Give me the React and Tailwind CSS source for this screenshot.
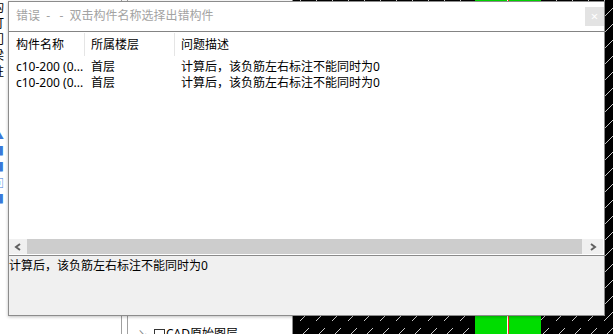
import React from "react";

const font = { fontFamily: '"Noto Sans", "Noto Sans CJK SC", sans-serif' };

const rows = [
  { name: "c10-200 (0...", floor: "首层", desc: "计算后，该负筋左右标注不能同时为0" },
  { name: "c10-200 (0...", floor: "首层", desc: "计算后，该负筋左右标注不能同时为0" },
];

// left edge of the app behind the dialog: only a few pixels of each line peek out
const edgeBits = ["构", "打", "门", "梁", "柱", "", "", "", "▲", "■", "■", "▣", "■", "1", "1", "1", "1", "1"];

function Hatch() {
  return (
    <svg className="absolute inset-0 h-full w-full" xmlns="http://www.w3.org/2000/svg">
      <defs>
        <pattern id="hatch" width="16" height="16" patternUnits="userSpaceOnUse" x="5" y="2">
          <path d="M2 15 L11 6" stroke="#c8c8c8" strokeWidth="1" />
        </pattern>
      </defs>
      <rect width="100%" height="100%" fill="#000" />
      <rect width="100%" height="100%" fill="url(#hatch)" />
    </svg>
  );
}

function Chevron({ dir }) {
  return (
    <svg width="8" height="8" viewBox="0 0 8 8">
      <polyline
        points={dir === "left" ? "6,1 2,4 6,7" : "2,1 6,4 2,7"}
        fill="none"
        stroke="#606060"
        strokeWidth="2"
      />
    </svg>
  );
}

export default function App() {
  return (
    <div className="relative w-[613px] h-[334px] overflow-hidden bg-white text-[12px] leading-[16px]" style={font}>
      {/* Background application */}
      <div className="flex h-full">
        <div className="flex w-[293px] h-full bg-white">
          <div className="w-[121px] h-full flex flex-col overflow-hidden">
            {edgeBits.map((c, i) => (
              <span
                key={i}
                className={`h-[16px] -ml-[8px] leading-[16px] ${i >= 8 && i <= 12 ? "text-[#3b78d8]" : "text-black"}`}
              >
                {c}
              </span>
            ))}
          </div>
          <div className="w-[1px] h-full bg-[#a0a0a0]" />
          <div className="w-[5px] h-full" />
          <div className="w-[1px] h-full bg-[#a0a0a0]" />
          <div className="flex-1 flex flex-col justify-end">
            <div className="flex items-center h-[16px] -mb-[8px] pl-[10px] text-black">
              <span className="text-[#888] text-[10px] w-[16px]">↘</span>
              <span className="w-[11px] h-[11px] border border-[#333] bg-white mr-[1px]" />
              <span>CAD原始图层</span>
            </div>
          </div>
          <div className="w-[1px] h-full bg-[#909090]" />
        </div>
        <div className="relative flex-1 h-full">
          <Hatch />
          <div className="absolute left-[182px] top-0 w-[32px] h-full bg-[#00dd00]" />
          <div className="absolute left-[214px] top-0 w-[1px] h-full bg-white" />
          <div className="absolute left-[215px] top-0 w-[1px] h-full bg-[#ff2020]" />
          <div className="absolute left-[216px] top-0 w-[32px] h-full bg-[#00dd00]" />
        </div>
      </div>

      {/* Error dialog */}
      <div className="absolute left-[8px] top-[1px] w-[597px] h-[315px] border border-[#8c8c8c] bg-white flex flex-col shadow-[0_1px_3px_rgba(0,0,0,0.25)]">
        <div className="h-[29px] flex items-start shrink-0">
          <span className="pl-[7px] mt-[6px] text-[#a3a3a3] whitespace-pre">错误  -   -  双击构件名称选择出错构件</span>
          <div className="ml-auto mt-[5px] w-[19px] h-[19px] bg-[#e3e3e3] flex items-center justify-center text-white text-[13px] leading-none">
            ×
          </div>
        </div>

        <div className="flex-1 flex flex-col border-t border-[#848484] bg-white text-black">
          <div className="flex h-[25px] items-center shrink-0">
            <div className="w-[76px] h-[23px] flex items-center pl-[7px] border-r border-[#e5e5e5]">构件名称</div>
            <div className="w-[90px] h-[23px] flex items-center pl-[6px] border-r border-[#e5e5e5]">所属楼层</div>
            <div className="flex-1 pl-[6px]">问题描述</div>
          </div>
          <div className="mt-[2px]">
            {rows.map((r, i) => (
              <div key={i} className="flex h-[16px] items-center">
                <div className="w-[76px] pl-[7px] whitespace-nowrap overflow-hidden">{r.name}</div>
                <div className="w-[90px] pl-[6px]">{r.floor}</div>
                <div className="flex-1 pl-[6px] whitespace-nowrap">{r.desc}</div>
              </div>
            ))}
          </div>
          <div className="flex-1" />
          <div className="flex h-[15px] mb-[1px] shrink-0">
            <div className="w-[18px] bg-[#f0f0f0] flex items-center justify-center">
              <Chevron dir="left" />
            </div>
            <div className="flex-1 bg-[#cdcdcd]" />
            <div className="w-[21px] bg-[#f0f0f0] flex items-center justify-center">
              <Chevron dir="right" />
            </div>
            <div className="w-[1px] bg-white" />
          </div>
        </div>

        <div className="h-[60px] shrink-0 border-t border-[#8a8a8a] bg-[#f0f0f0] pt-[2px] text-black">
          计算后，该负筋左右标注不能同时为0
        </div>
      </div>
    </div>
  );
}
